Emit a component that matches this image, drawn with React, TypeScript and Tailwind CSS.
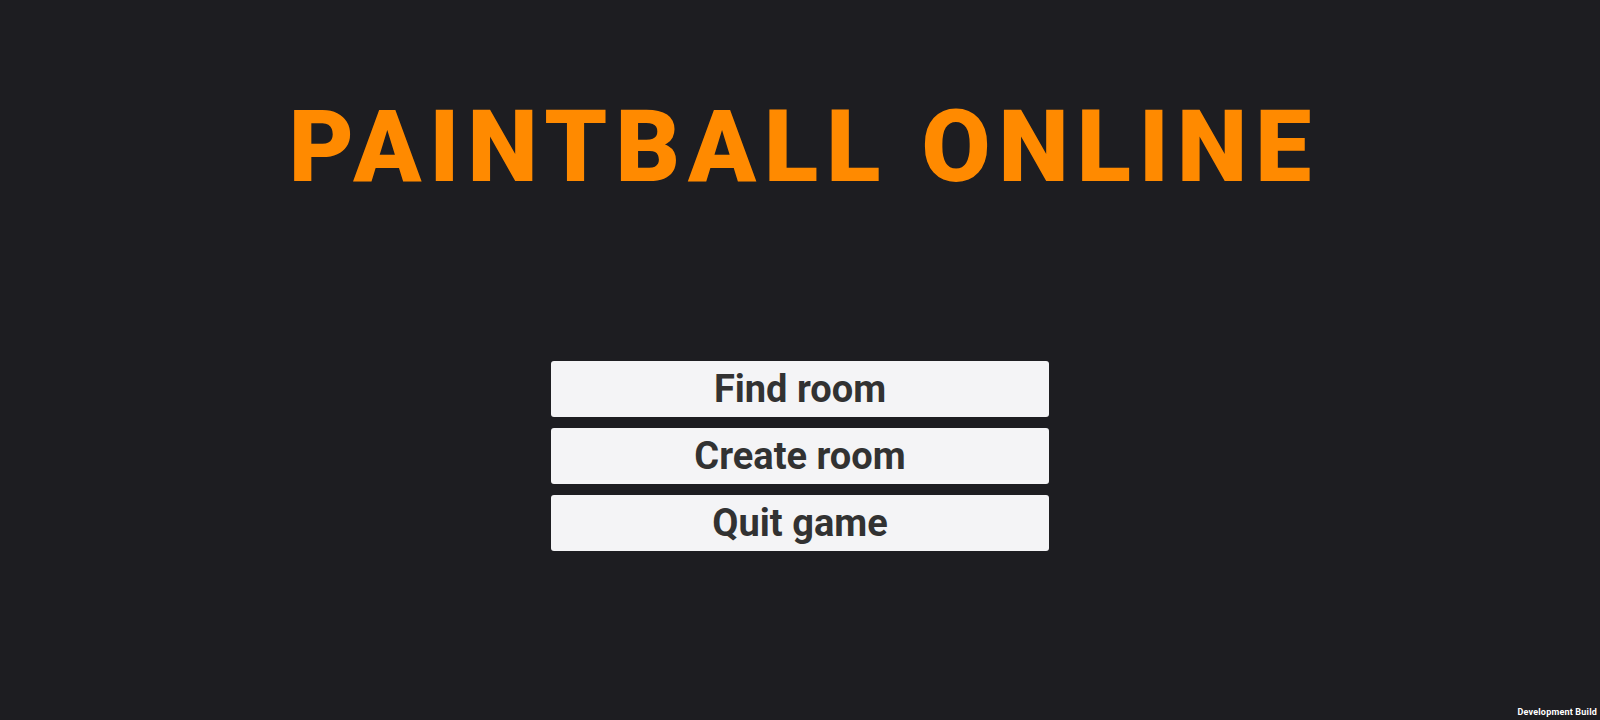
const buttons = ["Find room", "Create room", "Quit game"];

export default function App() {
  return (
    <div
      className="relative flex h-[720px] w-full flex-col items-center bg-[#1d1d21]"
      style={{ fontFamily: "Roboto, 'Liberation Sans', sans-serif" }}
    >
      <h1 className="mt-[97px] pl-[8px] text-[100px] font-black leading-[100px] tracking-[8px] text-[#ff8a00]">
        PAINTBALL ONLINE
      </h1>
      <div className="mt-[164px] flex w-[498px] flex-col gap-[11px]">
        {buttons.map((label) => (
          <button
            key={label}
            className="flex h-[56px] items-center justify-center rounded-[3px] bg-[#f4f4f6] text-[38px] font-bold text-[#323232]"
          >
            {label}
          </button>
        ))}
      </div>
      <div className="absolute bottom-[1px] right-[3px] text-[9px] font-bold tracking-[0.2px] text-white">
        Development Build
      </div>
    </div>
  );
}
